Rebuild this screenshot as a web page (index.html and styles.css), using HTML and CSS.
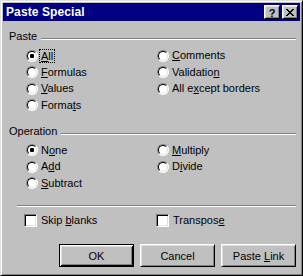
FILE: index.html
```html
<!DOCTYPE html>
<html>
<head>
<meta charset="utf-8">
<title>Paste Special</title>
<link rel="stylesheet" href="styles.css">
</head>
<body>
<div class="window">
  <div class="titlebar">
    <span class="title">Paste Special</span>
    <div class="tbtns">
      <span class="tbtn help">?</span>
      <span class="tbtn close"><svg width="8" height="7" viewBox="0 0 8 7" shape-rendering="crispEdges"><path d="M0 0h2v1H0zM6 0h2v1H6zM1 1h2v1H1zM5 1h2v1H5zM2 2h4v1H2zM3 3h2v1H3zM2 4h4v1H2zM1 5h2v1H1zM5 5h2v1H5zM0 6h2v1H0zM6 6h2v1H6z" fill="#000"/></svg></span>
    </div>
  </div>
  <div class="content">
    <div class="group-head head-paste"><span>Paste</span><i class="rule"></i></div>
    <div class="options rows4">
      <div class="opt"><span class="radio on"></span><span class="lbl focus"><u>A</u>ll</span></div>
      <div class="opt"><span class="radio"></span><span class="lbl"><u>F</u>ormulas</span></div>
      <div class="opt"><span class="radio"></span><span class="lbl"><u>V</u>alues</span></div>
      <div class="opt"><span class="radio"></span><span class="lbl">Forma<u>t</u>s</span></div>
      <div class="opt"><span class="radio"></span><span class="lbl"><u>C</u>omments</span></div>
      <div class="opt"><span class="radio"></span><span class="lbl">Validatio<u>n</u></span></div>
      <div class="opt"><span class="radio"></span><span class="lbl">All e<u>x</u>cept borders</span></div>
    </div>
    <div class="group-head head-op"><span>Operation</span><i class="rule"></i></div>
    <div class="options rows3">
      <div class="opt"><span class="radio on"></span><span class="lbl">N<u>o</u>ne</span></div>
      <div class="opt"><span class="radio"></span><span class="lbl">A<u>d</u>d</span></div>
      <div class="opt"><span class="radio"></span><span class="lbl"><u>S</u>ubtract</span></div>
      <div class="opt"><span class="radio"></span><span class="lbl"><u>M</u>ultiply</span></div>
      <div class="opt"><span class="radio"></span><span class="lbl">D<u>i</u>vide</span></div>
    </div>
    <i class="sep"></i>
    <div class="checks">
      <div class="opt"><span class="check"></span><span class="lbl">Skip <u>b</u>lanks</span></div>
      <div class="opt"><span class="check"></span><span class="lbl">Transpos<u>e</u></span></div>
    </div>
    <div class="buttons">
      <span class="btn default"><span>OK</span></span>
      <span class="btn"><span>Cancel</span></span>
      <span class="btn"><span>Paste <u>L</u>ink</span></span>
    </div>
  </div>
</div>
</body>
</html>
```
FILE: styles.css
```css
* { box-sizing: border-box; }
html, body { margin: 0; padding: 0; }
body {
  background: #c0c0c0;
  font-family: "Liberation Sans", Arial, sans-serif;
  font-size: 11px;
  color: #000;
}
.window {
  width: 303px;
  height: 276px;
  background: #c0c0c0;
  border: 1px solid;
  border-color: #dfdfdf #000 #000 #dfdfdf;
  box-shadow: inset 1px 1px #fff, inset -1px -1px #808080;
  padding: 2px;
  display: flex;
  flex-direction: column;
}
.titlebar {
  height: 18px;
  flex: none;
  background: #000080;
  display: flex;
  align-items: center;
  justify-content: space-between;
  padding: 0 2px 0 3px;
}
.title {
  color: #fff;
  font-weight: bold;
  font-size: 12px;
  letter-spacing: 0.1px;
  line-height: 17px;
}
.tbtns { display: flex; gap: 2px; }
.tbtn {
  width: 16px;
  height: 14px;
  background: #c0c0c0;
  border: 1px solid;
  border-color: #fff #000 #000 #fff;
  box-shadow: inset 1px 1px #dfdfdf, inset -1px -1px #808080;
  display: flex;
  align-items: center;
  justify-content: center;
}
.tbtn.help {
  font-weight: bold;
  font-size: 11px;
  line-height: 12px;
  padding-top: 1px;
}
.tbtn.close svg { display: block; margin-top: 1px; }
.content {
  flex: 1;
  display: flex;
  flex-direction: column;
  padding: 0 4px 0 6px;
}
.group-head {
  display: flex;
  align-items: flex-start;
  height: 13px;
  line-height: 13px;
}
.head-paste { margin-top: 9px; }
.head-op { margin-top: 11.5px; }
.rule {
  flex: 1;
  height: 2px;
  margin-left: 4px;
  margin-top: 8px;
  border-top: 1px solid #808080;
  border-bottom: 1px solid #fff;
}
.options {
  display: grid;
  grid-auto-flow: column;
  grid-template-columns: 131px auto;
  padding-left: 17px;
}
.rows4 { grid-template-rows: repeat(4, 16.5px); margin-top: 4.5px; }
.rows3 { grid-template-rows: repeat(3, 16.5px); margin-top: 4px; }
.opt {
  display: flex;
  align-items: center;
  height: 16.5px;
  line-height: 13px;
}
.radio {
  flex: none;
  position: relative;
  width: 12px;
  height: 12px;
  border-radius: 50%;
  background: #fff;
  border: 1px solid;
  border-color: #808080 #fff #fff #808080;
}
.radio::before {
  content: "";
  position: absolute;
  inset: 0;
  border-radius: 50%;
  border: 1px solid;
  border-color: #000 #dfdfdf #dfdfdf #000;
}
.radio.on::after {
  content: "";
  position: absolute;
  left: 3px;
  top: 3px;
  width: 4px;
  height: 4px;
  border-radius: 1px;
  background: #000;
}
.lbl { margin-left: 3px; white-space: nowrap; }
.lbl.focus {
  margin-left: 1px;
  padding: 0 1px;
  border: 1px dotted #000;
  line-height: 12px;
}
u { text-underline-offset: 1px; }
.sep {
  display: block;
  height: 2px;
  margin: 13.5px 0 0 8px;
  border-top: 1px solid #808080;
  border-bottom: 1px solid #fff;
}
.checks {
  display: grid;
  grid-template-columns: 132px auto;
  padding-left: 15px;
  margin-top: 4.75px;
}
.check {
  flex: none;
  width: 13px;
  height: 13px;
  background: #fff;
  border: 1px solid;
  border-color: #808080 #fff #fff #808080;
  box-shadow: inset 1px 1px #000, inset -1px -1px #dfdfdf;
}
.check + .lbl { margin-left: 4px; }
.buttons {
  display: flex;
  justify-content: flex-end;
  gap: 6px;
  margin-top: 15.75px;
}
.btn {
  width: 75px;
  height: 23px;
  display: flex;
  align-items: center;
  justify-content: center;
  white-space: nowrap;
  background: #c0c0c0;
  border: 1px solid;
  border-color: #fff #000 #000 #fff;
  box-shadow: inset 1px 1px #dfdfdf, inset -1px -1px #808080;
}
.btn.default {
  border-color: #000;
  box-shadow: inset 1px 1px #fff, inset -1px -1px #000, inset 2px 2px #dfdfdf, inset -2px -2px #808080;
}
```
